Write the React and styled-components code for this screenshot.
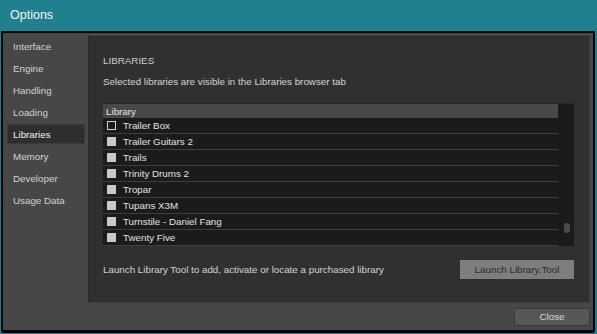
import styled, { createGlobalStyle } from "styled-components";

const GlobalStyle = createGlobalStyle`
    html, body {
        margin: 0;
        padding: 0;
        background: #20808f;
    }
    body {
        font-family: "Liberation Sans", Arial, sans-serif;
    }
`;

const sections = ["Interface", "Engine", "Handling", "Loading", "Libraries", "Memory", "Developer", "Usage Data"];

const libraries = [
    { name: "Trailer Box", active: false },
    { name: "Trailer Guitars 2", active: true },
    { name: "Trails", active: true },
    { name: "Trinity Drums 2", active: true },
    { name: "Tropar", active: true },
    { name: "Tupans X3M", active: true },
    { name: "Turnstile - Daniel Fang", active: true },
    { name: "Twenty Five", active: true },
];

const App = () => {
    return (
        <>
            <GlobalStyle />
            <Window>
                <TitleBar>Options</TitleBar>
                <Frame>
                    <Main>
                        <Sidebar>
                            {sections.map(s => (
                                <NavItem key={s} $active={s === "Libraries"}>{s}</NavItem>
                            ))}
                        </Sidebar>
                        <Panel>
                            <Heading>LIBRARIES</Heading>
                            <Description>Selected libraries are visible in the Libraries browser tab</Description>
                            <ListBox>
                                <List>
                                    <ListHeader>Library</ListHeader>
                                    {libraries.map(lib => (
                                        <Row key={lib.name}>
                                            <Check $checked={lib.active} />
                                            {lib.name}
                                        </Row>
                                    ))}
                                </List>
                                <ScrollTrack>
                                    <ScrollThumb />
                                </ScrollTrack>
                            </ListBox>
                            <ToolRow>
                                <Description>Launch Library Tool to add, activate or locate a purchased library</Description>
                                <ToolButton>Launch Library.Tool</ToolButton>
                            </ToolRow>
                        </Panel>
                    </Main>
                    <Footer>
                        <CloseButton>Close</CloseButton>
                    </Footer>
                </Frame>
            </Window>
        </>
    );
};

export default App;

const Window = styled.div`
    width: 597px;
    height: 334px;
    display: flex;
    flex-direction: column;
    background: #20808f;
    overflow: hidden;
`;

const TitleBar = styled.div`
    height: 31px;
    flex-shrink: 0;
    display: flex;
    align-items: center;
    padding-left: 10px;
    padding-bottom: 1px;
    box-sizing: border-box;
    color: #f2f6f7;
    font-size: 12.5px;
`;

const Frame = styled.div`
    margin: 0 2px 1px 1px;
    flex: 1;
    border: 2px solid #050505;
    border-bottom-width: 3px;
    border-radius: 0 0 3px 3px;
    background: #474747;
    display: flex;
    flex-direction: column;
`;

const Main = styled.div`
    display: flex;
    padding: 3px 3px 0 0;
    height: 270px;
    box-sizing: border-box;
`;

const Sidebar = styled.div`
    width: 85px;
    flex-shrink: 0;
    display: flex;
    flex-direction: column;
    gap: 2px;
    padding-left: 4px;
    box-sizing: border-box;
`;

const NavItem = styled.div`
    width: 78px;
    height: 20px;
    box-sizing: border-box;
    display: flex;
    align-items: center;
    padding-left: 5px;
    font-size: 9.8px;
    color: ${p => (p.$active ? "#f4f4f4" : "#d2d2d2")};
    background: ${p => (p.$active ? "#2e2e2e" : "transparent")};
    border: 1px solid ${p => (p.$active ? "#3b3b3b" : "transparent")};
`;

const Panel = styled.div`
    flex: 1;
    background: #303030;
    border-top: 1px solid #2a2a2a;
    border-left: 1px solid #2a2a2a;
    border-right: 1px solid #3c3c3c;
    border-bottom: 1px solid #3c3c3c;
    padding: 18px 15px 0 14px;
    display: flex;
    flex-direction: column;
`;

const Heading = styled.div`
    font-size: 9.8px;
    color: #cccccc;
    height: 12px;
    line-height: 12px;
`;

const Description = styled.div`
    font-size: 9.8px;
    color: #d4d4d4;
    margin-top: 9px;
    height: 12px;
    line-height: 12px;
`;

const ListBox = styled.div`
    margin-top: 15px;
    display: flex;
    height: 143px;
    flex-shrink: 0;
    background: #1b1b1b;
    border-top: 1px solid #262626;
    box-sizing: border-box;
`;

const List = styled.div`
    flex: 1;
    display: flex;
    flex-direction: column;
`;

const ListHeader = styled.div`
    height: 14px;
    flex-shrink: 0;
    background: #484848;
    color: #e6e6e6;
    font-size: 9.8px;
    padding-left: 3px;
    display: flex;
    align-items: center;
`;

const Row = styled.div`
    height: 16px;
    flex-shrink: 0;
    box-sizing: border-box;
    border-bottom: 1px solid #3e3e3e;
    display: flex;
    align-items: center;
    gap: 7px;
    padding-left: 4px;
    font-size: 9.8px;
    color: #e2e2e2;
`;

const Check = styled.span`
    width: 9px;
    height: 9px;
    box-sizing: border-box;
    background: ${p => (p.$checked ? "#c9c9c9" : "#1b1b1b")};
    border: 1px solid ${p => (p.$checked ? "#c9c9c9" : "#d4d4d4")};
`;

const ScrollTrack = styled.div`
    width: 16px;
    display: flex;
    flex-direction: column;
    justify-content: flex-end;
    align-items: center;
    padding-bottom: 13px;
    padding-left: 2px;
    box-sizing: border-box;
`;

const ScrollThumb = styled.div`
    width: 6px;
    height: 10px;
    border-radius: 3px;
    background: #4b4b4b;
`;

const ToolRow = styled.div`
    margin-top: 14px;
    display: flex;
    align-items: center;
    justify-content: space-between;
    > div {
        margin-top: 0;
    }
`;

const ToolButton = styled.div`
    width: 114px;
    height: 19px;
    background: #7e7e7e;
    color: #2a2a2a;
    font-size: 9.8px;
    display: flex;
    align-items: center;
    justify-content: center;
`;

const Footer = styled.div`
    flex: 1;
    display: flex;
    align-items: center;
    justify-content: flex-end;
    padding-right: 3px;
`;

const CloseButton = styled.div`
    width: 76px;
    height: 18px;
    box-sizing: border-box;
    background: #575757;
    border: 1px solid #393939;
    color: #d8d8d8;
    font-size: 9.8px;
    display: flex;
    align-items: center;
    justify-content: center;
`;
